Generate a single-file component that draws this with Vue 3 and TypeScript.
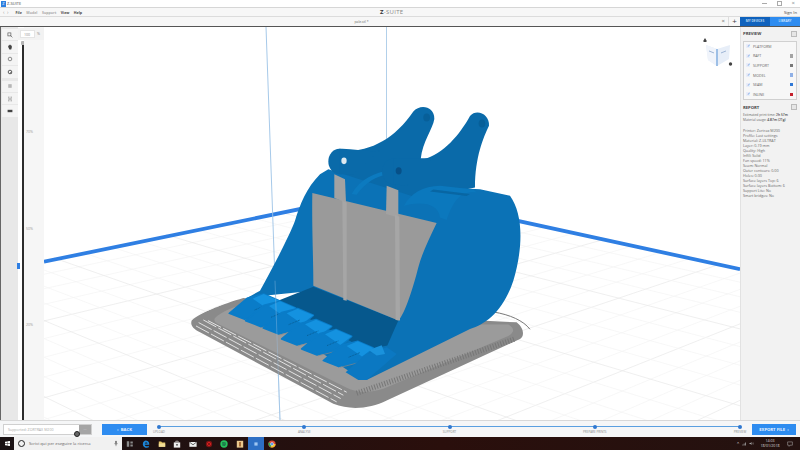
<script setup lang="ts">
const menus = [
  { label: 'File', on: true },
  { label: 'Model', on: false },
  { label: 'Support', on: false },
  { label: 'View', on: true },
  { label: 'Help', on: true },
]

const layers = [
  { label: 'PLATFORM', color: '' },
  { label: 'RAFT', color: '#a3a3a3' },
  { label: 'SUPPORT', color: '#777' },
  { label: 'MODEL', color: '#8fb0e6' },
  { label: 'SEAM', color: '#2f78d6' },
  { label: 'INLINE', color: '#c4202c' },
]

const report = [
  'Printer: Zortrax M200',
  'Profile: Last settings',
  'Material: Z-ULTRAT',
  'Layer: 0.19 mm',
  'Quality: High',
  'Infill: Solid',
  'Fan speed: 11%',
  'Seam: Normal',
  'Outer contours: 0.00',
  'Holes: 0.00',
  'Surface layers Top: 6',
  'Surface layers Bottom: 6',
  'Support Lite: No',
  'Smart bridges: No',
]

const steps = ['UPLOAD', 'ANALYSE', 'SUPPORT', 'PREPARE PRINTS', 'PREVIEW']

// floor grid: two fans of lines, clipped at the blue platform edges
const vpA = { x: 1800, y: -100 }
const vpB = { x: -1000, y: -114 }
const edgeLeft = (x: number) => 269 - 0.205 * x
const edgeRight = (x: number) => 105.6 + 0.22 * x

function fan(vp: { x: number; y: number }, x0: number, y0: number, edge: (x: number) => number) {
  const out: { x1: number; y1: number; x2: number; y2: number; major: boolean }[] = []
  for (let k = 1; k < 30; k++) {
    const y1 = y0 + 13 * k * (1 + 0.04 * k)
    const m = (vp.y - y1) / (vp.x - x0)
    const b = y1 - m * x0
    // walk along the line until it crosses the far edge
    let x2 = x0
    const dir = vp.x > x0 ? 1 : -1
    while (x2 > -400 && x2 < 1300 && m * x2 + b > edge(x2)) x2 += dir * 2
    out.push({ x1: x0, y1, x2, y2: m * x2 + b, major: k % 4 === 0 })
  }
  return out
}

const grid = [...fan(vpA, 44, 260, edgeRight), ...fan(vpB, 740, 268, edgeLeft)]

const teeth = [
  [148, 668],
  [197, 690],
  [250, 712],
  [305, 745],
  [365, 775],
  [430, 810],
]

function shift(x: number, y: number, pts: number[][]) {
  return pts.map(([a, b]) => `${x + a},${y + b}`).join(' ')
}
const toothBody = [[0, 0], [55, -46], [103, -58], [150, -38], [100, 4], [46, 18]]
const toothTop = [[70, -44], [103, -58], [150, -38], [116, -12]]
</script>

<template>
  <div class="app">
    <header class="title-bar">
      <span class="app-logo">Z</span>
      <span class="app-name">Z-SUITE</span>
      <span class="win-btns">
        <i class="win-min"></i>
        <i class="win-max"></i>
        <i class="win-close">×</i>
      </span>
    </header>

    <nav class="menu-bar">
      <span class="arrows">‹ &nbsp;›</span>
      <span v-for="m in menus" :key="m.label" class="menu-item" :class="{ off: !m.on }">{{ m.label }}</span>
      <span class="brand"><b>Z</b>-SUITE</span>
      <span class="sign-in">Sign In</span>
    </nav>

    <div class="tab-bar">
      <div class="tab-doc">
        <span class="tab-name">pale.stl *</span>
        <span class="tab-close">×</span>
      </div>
      <span class="tab-add">+</span>
      <span class="tab-blue dark">MY DEVICES</span>
      <span class="tab-blue">LIBRARY</span>
    </div>

    <main class="workspace">
      <aside class="tools">
        <div class="tool-group">
          <span class="tool"><svg viewBox="0 0 10 10"><rect x="1.5" y="1.5" width="5" height="5" /><path d="M6 6l3 3" /></svg></span>
          <span class="tool"><svg viewBox="0 0 10 10"><path class="solid" d="M2 5V3h1V2h1v-.6h2V2h1v1h1v3L7 9H4z" /></svg></span>
          <span class="tool"><svg viewBox="0 0 10 10"><circle cx="5" cy="5" r="3" /></svg></span>
          <span class="tool"><svg viewBox="0 0 10 10"><circle cx="5" cy="5" r="3" stroke-width="1.6" /><path d="M5 5l3 3" /></svg></span>
        </div>
        <div class="tool-group">
          <span class="tool"><svg viewBox="0 0 10 10"><path d="M3 2v6M6 2v6M4 2v6M7 2v6" stroke="#999" /></svg></span>
          <span class="tool"><svg viewBox="0 0 10 10"><path d="M2 2h2M6 2h2M2 5h6M2 8h2M6 8h2" /></svg></span>
          <span class="tool"><svg viewBox="0 0 10 10"><path class="solid" d="M1 3h8v4H1z" /></svg></span>
        </div>
      </aside>

      <div class="slider">
        <div class="track"></div>
        <i class="slider-knob"></i>
        <i class="slider-mark"></i>
        <div class="slider-side">
          <div class="zoom-row">
            <span class="zoom-input">100</span>
            <span class="zoom-unit">%</span>
          </div>
          <span class="tick t70">70%</span>
          <span class="tick t50">50%</span>
          <span class="tick t20">20%</span>
        </div>
      </div>

      <div class="viewport">
        <svg class="scene" viewBox="44 26 696 394" preserveAspectRatio="none">
          <line
            v-for="(l, i) in grid"
            :key="i"
            :x1="l.x1"
            :y1="l.y1"
            :x2="l.x2"
            :y2="l.y2"
            :stroke="l.major ? '#e8e8e8' : '#f3f3f3'"
            stroke-width="0.7"
          />
          <path d="M44 261L384 191L740 268.5" fill="none" stroke="#2f7fe3" stroke-width="3.8" />
          <line x1="386.5" y1="26" x2="386.5" y2="140" stroke="#a9cbe8" stroke-width="0.9" />
          <line x1="266" y1="26" x2="280" y2="420" stroke="#9cc3e6" stroke-width="0.9" />

          <!-- bucket, drawn in the coordinates of a 3x crop -->
          <g transform="translate(180 90) scale(.33333)">
            <path d="M940 664C990 672 1030 690 1050 716" fill="none" stroke="#777" stroke-width="3" />
            <path d="M35 690C60 665 130 640 190 622L900 690L1010 695C1035 715 1032 740 1020 745L620 930C570 955 510 960 460 940L60 725C40 715 30 705 35 690Z" fill="#8a8a8a" />
            <path d="M48 706L470 934M56 696L482 924M70 688L490 914M84 690L500 905M60 668L130 640" fill="none" stroke="#f4f4f4" stroke-width="2.5" stroke-dasharray="44 7" />
            <path d="M105 682C125 662 170 642 200 642L900 702L985 702C1008 715 1000 728 985 736L610 895C570 908 530 908 500 892L118 702C105 696 100 690 105 682Z" fill="#9b9b9b" />
            <path d="M530 908L1005 745" fill="none" stroke="#777" stroke-width="16" stroke-dasharray="3 5" />

            <path d="M465 180C560 190 640 150 700 62C720 38 764 46 763 84C758 115 728 150 722 205L722 300L470 300Z" fill="#0a6aa9" />
            <path d="M640 210L730 205C790 190 840 130 870 75C890 52 930 70 927 105C910 140 885 200 885 290L650 340Z" fill="#0a6aa9" />

            <path d="M205 620L240 600C290 510 330 430 345 390C360 340 380 290 420 250L445 235L770 340L800 290L900 295L990 315C1030 370 1030 470 1000 570C970 660 920 700 870 715L560 868L400 600Z" fill="#0b72b6" />
            <path d="M515 310C540 265 585 245 625 240L625 250C590 255 555 275 530 312Z" fill="#0c7abf" />
            <path d="M672 345C690 310 730 285 780 285L880 296L890 305C840 300 820 330 800 388L780 380C775 340 730 330 672 345Z" fill="#0b78bd" />
            <path d="M760 296L870 310L860 316L750 302Z" fill="#0866a3" />

            <polygon points="205,640 205,622 290,632 565,778 625,770 548,868 520,850" fill="#0a74ba" />
            <path d="M400 588L290 632L560 778L622 765L655 690Z" fill="#06588d" />
            <path d="M397 307L770 397C745 450 725 490 715 530C700 590 675 670 655 690L400 585C400 500 395 400 397 307Z" fill="#9a9a9a" />
            <path d="M463 250L495 265L498 335L463 322Z" fill="#a2a2a2" />
            <path d="M487 330L500 335L500 630L490 628Z" fill="#a6a6a6" />
            <path d="M620 285L655 298L655 380L618 370Z" fill="#a2a2a2" />
            <path d="M645 372L658 378L660 690L647 688Z" fill="#a6a6a6" />

            <ellipse cx="478" cy="212" rx="33" ry="38" fill="#0a6aa9" />
            <path d="M478 174C520 172 560 185 600 180L520 250L478 250Z" fill="#0a6aa9" />
            <ellipse cx="492" cy="210" rx="8" ry="10" fill="#dfe9f0" />
            <ellipse cx="640" cy="242" rx="34" ry="38" fill="#0a6aa9" />
            <path d="M640 204C680 200 730 205 760 200L680 285L640 280Z" fill="#0a6aa9" />
            <ellipse cx="656" cy="240" rx="9" ry="11" fill="#075088" />
            <ellipse cx="740" cy="80" rx="10" ry="12" fill="#075f99" />
            <ellipse cx="906" cy="98" rx="10" ry="12" fill="#075f99" />

            <g v-for="t in teeth" :key="t[0]">
              <polygon :points="shift(t[0], t[1], toothBody)" fill="#0a7cc8" stroke="#0a7cc8" stroke-width="5" stroke-linejoin="round" />
              <polygon :points="shift(t[0], t[1], toothTop)" fill="#1492e0" />
              <path :d="`M${t[0] + 76} ${t[1] - 10}l34 -14`" stroke="#075f99" stroke-width="3" stroke-dasharray="3 2" />
              <path :d="`M${t[0] + 49} ${t[1] + 21}L${t[0] + 103} ${t[1] + 7}`" stroke="#8a8a8a" stroke-width="2" />
            </g>
            <polygon points="497,845 556,792 620,770 650,790 560,868 535,868" fill="#0b78c2" />
            <polygon points="566,778 605,764 615,790 590,795" fill="#1a92dc" />
          </g>
          <line x1="275" y1="280" x2="280" y2="420" stroke="#9cc3e6" stroke-width="0.7" opacity=".55" />

          <!-- orientation cube -->
          <g>
            <path d="M706 44L717 48L730 44L729 58L717 65L708 59Z" fill="#e7eef8" />
            <path d="M706 44L717 48L717 65L708 59Z" fill="#f0f4fb" />
            <path d="M717 48V65" stroke="#9dbfe6" stroke-width="2" />
            <path d="M709 50l5 2M721 52l5 -2" stroke="#9db4d4" stroke-width="1" />
            <path d="M703.5 39.5L705 37L706.5 39.5V41H703.5Z" fill="#444" />
            <circle cx="730.5" cy="63" r="1.7" fill="#444" />
          </g>
        </svg>
      </div>

      <aside class="side-panel">
        <section class="panel-head">
          <span>PREVIEW</span>
          <i class="panel-icon"></i>
        </section>
        <div class="layers">
          <div v-for="l in layers" :key="l.label" class="layer">
            <span class="check">✓</span>
            <span class="layer-name">{{ l.label }}</span>
            <i v-if="l.color" class="swatch" :style="{ background: l.color }"></i>
          </div>
        </div>
        <section class="panel-head report-head">
          <span>REPORT</span>
          <i class="panel-icon"></i>
        </section>
        <div class="report">
          <p class="summary">Estimated print time: <b>2h 57m</b></p>
          <p class="summary usage">Material usage: <b>4.87m (21g)</b></p>
          <p v-for="r in report" :key="r">{{ r }}</p>
        </div>
      </aside>
    </main>

    <footer class="bottom-bar">
      <div class="printer">
        <span class="printer-name">Supported: ZORTRAX M200</span>
        <span class="printer-btn">···</span>
        <i class="cursor-dot"></i>
      </div>
      <button class="action back">‹ &nbsp;BACK</button>
      <div class="timeline">
        <div class="timeline-line"></div>
        <div v-for="s in steps" :key="s" class="step">
          <i class="step-dot"></i>
          <span class="step-label">{{ s }}</span>
        </div>
      </div>
      <button class="action export">EXPORT FILE &nbsp;›</button>
    </footer>

    <div class="taskbar">
      <span class="start">
        <svg viewBox="0 0 10 10"><path d="M0 1.4L4.2.8v3.9H0zM4.8.7L10 0v4.7H4.8zM0 5.3h4.2v3.9L0 8.6zM4.8 5.3H10V10l-5.2-.7z" fill="#fff" /></svg>
      </span>
      <div class="search">
        <i class="cortana"></i>
        <span class="search-text">Scrivi qui per eseguire la ricerca</span>
        <svg class="mic" viewBox="0 0 6 10"><rect x="2" y="1" width="2" height="5" rx="1" fill="#555" /><path d="M1 4.5c0 3 4 3 4 0M3 7v2" fill="none" stroke="#555" stroke-width=".7" /></svg>
      </div>
      <div class="apps">
        <span class="app-ico"><svg viewBox="0 0 10 10"><path d="M1 1.5h3v7H1zM5.5 2h3v2.5h-3zM5.5 5.500h3V8h-3z" fill="#8a8a8a" /></svg></span>
        <span class="app-ico"><svg viewBox="0 0 10 10"><path d="M1 5.5C1 2 3.5.5 5.500.8 8 1 9.300 3 9 6H3.500c.2 2 3.200 2.500 5 1.200v2C6 10.300 1.300 9.500 1 5.500zM3.500 4.400h3.400C6.800 2.700 3.900 2.700 3.500 4.400z" fill="#1c86d8" /></svg></span>
        <span class="app-ico"><svg viewBox="0 0 10 10"><path d="M1 2h3l1 1h4v5.500H1z" fill="#e7c76a" /><path d="M1 4.500h8v4H1z" fill="#f3dd97" /></svg></span>
        <span class="app-ico"><svg viewBox="0 0 10 10"><path d="M1 3h8v6.500H1z" fill="#eee" /><path d="M3.500 3V1.500h3V3" fill="none" stroke="#eee" stroke-width=".8" /><rect x="4" y="5" width="2" height="2" fill="#555" /></svg></span>
        <span class="app-ico"><svg viewBox="0 0 10 10"><path d="M.5 2.500h9v6h-9z" fill="#eee" /><path d="M.5 2.500L5 6l4.500-3.500" fill="none" stroke="#333" stroke-width=".9" /></svg></span>
        <span class="app-ico"><svg viewBox="0 0 10 10"><circle cx="5" cy="5" r="4" fill="#7c1414" /><circle cx="5" cy="5" r="2" fill="none" stroke="#e22" stroke-width="1" /></svg></span>
        <span class="app-ico"><svg viewBox="0 0 10 10"><circle cx="5" cy="5" r="4.6" fill="#27c25d" /><path d="M2.500 3.700c1.700-.5 3.500-.3 5 .5M2.800 5.200c1.400-.4 3-.2 4.300.5M3.100 6.600c1.200-.3 2.400-.1 3.500.4" stroke="#123" stroke-width=".7" fill="none" /></svg></span>
        <span class="app-ico"><svg viewBox="0 0 10 10"><rect x="1" y="1" width="8" height="8.5" fill="#e9c88e" /><rect x="4" y="2.5" width="2" height="5.5" fill="#9a5a25" /></svg></span>
        <span class="app-ico active"><svg viewBox="0 0 10 10"><rect x="3" y="3" width="4" height="4" fill="#9fc6f2" /></svg></span>
        <span class="app-ico"><svg viewBox="0 0 10 10"><circle cx="5" cy="5" r="4.5" fill="#e04b3a" /><path d="M5 5L9.500 5A4.500 4.500 0 0 1 3 9z" fill="#f2c230" /><path d="M5 5L3 9A4.500 4.500 0 0 1 1 2.800z" fill="#34a853" /><circle cx="5" cy="5" r="1.9" fill="#4a8cf0" stroke="#fff" stroke-width=".6" /></svg></span>
      </div>
      <div class="tray">
        <span class="tray-glyph">⌃</span>
        <svg class="tray-ico" viewBox="0 0 10 10"><path d="M1 9h1.500V7H1zM3.500 9H5V5H3.500zM6 9h1.500V3H6z" fill="#aaa" /></svg>
        <svg class="tray-ico" viewBox="0 0 10 10"><path d="M1 4h2l2-2v6L3 6H1z" fill="#aaa" /><path d="M6.500 3.500c1 1 1 2 0 3M8 2.500c1.500 1.500 1.500 3.500 0 5" fill="none" stroke="#aaa" stroke-width=".7" /></svg>
        <span class="clock">14:03<br />18/01/2018</span>
        <svg class="notify" viewBox="0 0 10 10"><path d="M1 1.500h8v5.500H5L3.500 9V7H1z" fill="none" stroke="#bbb" stroke-width=".8" /></svg>
      </div>
    </div>
  </div>
</template>

<style scoped>
.app {
  width: 800px;
  height: 450px;
  display: flex;
  flex-direction: column;
  overflow: hidden;
  background: #fff;
  font-family: "Open Sans", "Liberation Sans", sans-serif;
  color: #555;
}

.title-bar {
  height: 7px;
  flex: none;
  display: flex;
  align-items: center;
  background: #fff;
}
.app-logo {
  width: 5px;
  height: 6px;
  margin-left: 1px;
  background: #2d7fe0;
  color: #fff;
  font-size: 4px;
  line-height: 6px;
  text-align: center;
}
.app-name {
  margin-left: 1px;
  font-size: 4px;
  color: #444;
}
.win-btns {
  margin-left: auto;
  display: flex;
  align-items: center;
  gap: 10px;
  padding-right: 5px;
}
.win-min {
  width: 5px;
  height: 1px;
  background: #aaa;
}
.win-max {
  width: 3px;
  height: 3px;
  border: 1px solid #aaa;
}
.win-close {
  font-style: normal;
  font-size: 6px;
  line-height: 7px;
  color: #888;
}

.menu-bar {
  height: 10px;
  flex: none;
  position: relative;
  display: flex;
  align-items: center;
  gap: 4.5px;
  padding-left: 3px;
  box-sizing: border-box;
  background: #f7f7f7;
  border-top: 1px solid #d6d6d6;
  border-bottom: 1px solid #dcdcdc;
  font-size: 3.6px;
}
.arrows {
  color: #999;
  width: 8px;
  font-size: 5px;
}
.menu-item {
  font-weight: 700;
  color: #444;
}
.menu-item.off {
  color: #aaa;
}
.brand {
  position: absolute;
  left: 380px;
  top: 0;
  font-size: 6px;
  letter-spacing: 0.3px;
  color: #888;
}
.brand b {
  color: #333;
}
.sign-in {
  margin-left: auto;
  padding-right: 3px;
  font-size: 4.2px;
  color: #444;
}

.tab-bar {
  height: 9.5px;
  flex: none;
  display: flex;
  box-sizing: border-box;
  background: #f7f7f7;
  border-bottom: 1px solid #555;
  font-size: 3.4px;
}
.tab-doc {
  flex: 1;
  display: flex;
  align-items: center;
  justify-content: center;
  position: relative;
  border-right: 1px solid #ddd;
}
.tab-name {
  color: #666;
  margin-right: 5px;
}
.tab-close {
  position: absolute;
  right: 3px;
  font-size: 6px;
  color: #666;
}
.tab-add {
  width: 11px;
  text-align: center;
  font-size: 8px;
  line-height: 8px;
  color: #444;
}
.tab-blue {
  width: 30px;
  height: 8.5px;
  background: #2e8cf0;
  color: #dcecff;
  text-align: center;
  font-size: 3.2px;
  line-height: 8.5px;
  font-weight: 600;
}
.tab-blue.dark {
  background: #0f62bd;
}

.workspace {
  flex: 1;
  min-height: 0;
  display: flex;
}

.tools {
  width: 18px;
  flex: none;
  display: flex;
  flex-direction: column;
  gap: 3px;
  padding-top: 2.5px;
  background: #e8e8e8;
  border-left: 1px solid #666;
  box-sizing: border-box;
}
.tool-group {
  display: flex;
  flex-direction: column;
  gap: 1px;
  margin-left: 1px;
}
.tool {
  height: 11.4px;
  display: flex;
  align-items: center;
  justify-content: center;
  background: #f4f4f4;
}
.tool svg {
  width: 6px;
  height: 6px;
  fill: none;
  stroke: #555;
  stroke-width: 1.1;
}
.tool svg .solid {
  fill: #444;
  stroke: none;
}

.slider {
  width: 26px;
  flex: none;
  position: relative;
  display: flex;
  background: #fff;
}
.track {
  width: 2px;
  margin: 14px 0 0 4px;
  background: #2c2c2c;
}
.slider-knob {
  position: absolute;
  left: 3px;
  top: 14px;
  width: 5px;
  height: 4px;
  background: #b5b5b5;
  border-radius: 1px;
}
.slider-mark {
  position: absolute;
  left: -1px;
  top: 236px;
  width: 3px;
  height: 6px;
  background: #2f7fe3;
}
.slider-side {
  flex: 1;
  position: relative;
  background: #f6f6f6;
}
.zoom-row {
  display: flex;
  align-items: center;
  height: 12px;
  margin: 1px 0 0 -6px;
  padding: 0 2px;
  background: #f2f2f2;
  font-size: 3.6px;
  color: #888;
  position: relative;
}
.zoom-input {
  width: 15px;
  height: 8px;
  line-height: 7px;
  padding-left: 3px;
  box-sizing: border-box;
  background: #fff;
  border: 1px solid #e4e4e4;
}
.zoom-unit {
  margin-left: 2px;
}
.tick {
  position: absolute;
  left: 2px;
  font-size: 3.6px;
  color: #999;
}
.t70 {
  top: 102px;
}
.t50 {
  top: 199px;
}
.t20 {
  top: 295px;
}

.viewport {
  flex: 1;
  min-width: 0;
  background: #fff;
}
.scene {
  display: block;
  width: 100%;
  height: 100%;
}

.side-panel {
  width: 60px;
  flex: none;
  box-sizing: border-box;
  padding: 0 3px 0 2px;
  background: #f2f2f2;
  border-left: 1px solid #e2e2e2;
}
.panel-head {
  height: 14px;
  display: flex;
  align-items: center;
  justify-content: space-between;
  font-size: 4.2px;
  font-weight: 700;
  color: #444;
}
.panel-icon {
  width: 4px;
  height: 4px;
  border: 1px solid #bbb;
  background: #e6e6e6;
}
.layers {
  background: #f7f7f7;
  border: 1px solid #d0d0d0;
  padding: 0 2px;
}
.layer {
  height: 9.6px;
  display: flex;
  align-items: center;
  font-size: 3.6px;
  color: #666;
}
.check {
  width: 4px;
  height: 4px;
  margin-right: 3px;
  line-height: 4px;
  text-align: center;
  background: #e8eefa;
  color: #3b78d0;
  font-size: 4px;
}
.swatch {
  width: 3.5px;
  height: 3.5px;
  margin-left: auto;
  margin-right: 1px;
}
.report-head {
  margin-bottom: -2px;
}
.report {
  font-size: 3.7px;
  line-height: 5px;
  color: #666;
}
.report p {
  margin: 0;
  white-space: nowrap;
}
.report .summary {
  font-size: 3.3px;
}
.report b {
  font-weight: 600;
  color: #444;
}
.report .usage {
  margin-bottom: 6px;
}

.bottom-bar {
  height: 17px;
  flex: none;
  display: flex;
  align-items: center;
  padding: 0 4px 0 3px;
  background: #f5f6f7;
  border-top: 1px solid #d8d8d8;
  box-sizing: border-box;
}
.printer {
  width: 89px;
  height: 11px;
  flex: none;
  display: flex;
  position: relative;
  background: #fff;
  border: 1px solid #d0d0d0;
  box-sizing: border-box;
  font-size: 3.6px;
  line-height: 9px;
  color: #aaa;
}
.printer-name {
  flex: 1;
  padding-left: 4px;
  white-space: nowrap;
}
.printer-btn {
  width: 12px;
  background: #a5a5a5;
  color: #ddd;
  text-align: center;
}
.cursor-dot {
  position: absolute;
  left: 70px;
  top: 6px;
  width: 4px;
  height: 4px;
  border: 1px solid #222;
  border-radius: 50%;
  background: #666;
}
.action {
  height: 11px;
  flex: none;
  padding: 0;
  border: none;
  background: #2e8cf0;
  color: #eaf4ff;
  font-family: inherit;
  font-size: 4.2px;
  font-weight: 700;
}
.back {
  width: 45px;
  margin-left: 10px;
}
.export {
  width: 44px;
  margin-left: 10px;
}
.timeline {
  flex: 1;
  margin-left: 10px;
  display: flex;
  justify-content: space-between;
  position: relative;
  height: 15px;
  width: 0;
}
.timeline-line {
  position: absolute;
  left: 2px;
  right: 2px;
  top: 4px;
  height: 1px;
  background: #5a9fe0;
}
.step {
  width: 4px;
  position: relative;
  display: flex;
  flex-direction: column;
  align-items: center;
}
.step-dot {
  width: 4px;
  height: 4px;
  margin-top: 3px;
  border-radius: 50%;
  background: #2f78d0;
  position: relative;
}
.step-label {
  margin-top: 1px;
  font-size: 3px;
  line-height: 4px;
  color: #888;
  white-space: nowrap;
}

.taskbar {
  height: 13px;
  flex: none;
  display: flex;
  align-items: center;
  background: linear-gradient(90deg, #1a1214, #2a0f0c 55%, #241210);
}
.start {
  width: 14px;
  display: flex;
  justify-content: center;
}
.start svg {
  width: 5px;
  height: 5px;
}
.search {
  width: 108px;
  height: 13px;
  flex: none;
  display: flex;
  align-items: center;
  background: #f1f1f1;
}
.cortana {
  width: 5px;
  height: 5px;
  margin-left: 4px;
  border: 1px solid #222;
  border-radius: 50%;
}
.search-text {
  margin-left: 4px;
  font-size: 4.2px;
  color: #666;
  white-space: nowrap;
}
.mic {
  width: 4px;
  height: 7px;
  margin-left: auto;
  margin-right: 4px;
}
.apps {
  display: flex;
  margin-left: 0.5px;
}
.app-ico {
  width: 15.7px;
  height: 13px;
  display: flex;
  align-items: center;
  justify-content: center;
}
.app-ico svg {
  width: 8px;
  height: 8px;
}
.app-ico.active {
  background: #2d6fc4;
}
.tray {
  margin-left: auto;
  display: flex;
  align-items: center;
  color: #ccc;
}
.tray-glyph {
  font-size: 5px;
  margin-right: 2px;
}
.tray-ico {
  width: 5px;
  height: 5px;
  margin-right: 2px;
}
.clock {
  width: 24px;
  margin-left: 2px;
  text-align: center;
  font-size: 3.6px;
  line-height: 4.6px;
  color: #ddd;
}
.notify {
  width: 6px;
  height: 6px;
  margin: 0 7px 0 5px;
}
</style>

<style>
html,
body {
  margin: 0;
  padding: 0;
  background: #fff;
}
</style>
